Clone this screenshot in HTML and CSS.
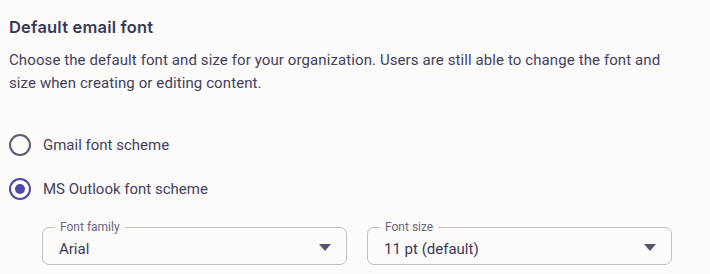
FILE: index.html
```html
<!DOCTYPE html>
<html lang="en">
  <head>
    <meta charset="UTF-8" />
    <title>Default email font</title>
    <link rel="stylesheet" href="styles.css">
  </head>
  <body>
    <div class="section">
      <h2>Default email font</h2>
      <p class="desc">Choose the default font and size for your organization. Users are still able to change the font and size when creating or editing content.</p>

      <div class="options">
        <label class="radio">
          <span class="circle"></span>
          <span>Gmail font scheme</span>
        </label>
        <label class="radio checked">
          <span class="circle"></span>
          <span>MS Outlook font scheme</span>
        </label>
      </div>

      <div class="selects">
        <div class="field">
          <span class="field-label">Font family</span>
          <span class="value">Arial</span>
          <span class="arrow"></span>
        </div>
        <div class="field">
          <span class="field-label">Font size</span>
          <span class="value">11 pt (default)</span>
          <span class="arrow"></span>
        </div>
      </div>
    </div>
  </body>
</html>
```

FILE: styles.css
```css
body {
  margin: 0;
  padding: 0;
  background-color: #fcfbfa;
  font-family: Roboto, Arial, sans-serif;
  color: #43415d;
}

.section {
  padding: 16px 10px 0 9px;
}

h2 {
  margin: 0;
  font-family: Inter, sans-serif;
  font-size: 16.5px;
  font-weight: 600;
  letter-spacing: 0.2px;
  line-height: 22px;
  color: #3a3858;
}

.desc {
  margin: 11px 0 0;
  font-size: 15px;
  letter-spacing: 0.1px;
  line-height: 23px;
  width: 670px;
}

.options {
  display: flex;
  flex-direction: column;
  gap: 22px;
  margin-top: 39px;
}

.radio {
  display: flex;
  align-items: center;
  gap: 12px;
  font-size: 15px;
  height: 22px;
}

.circle {
  box-sizing: border-box;
  width: 22px;
  height: 22px;
  border: 2px solid #5c5a70;
  border-radius: 50%;
  display: flex;
  align-items: center;
  justify-content: center;
}

.checked .circle {
  border-color: #4e4aa3;
}

.checked .circle::after {
  content: "";
  width: 10px;
  height: 10px;
  border-radius: 50%;
  background-color: #4e4aa3;
}

.selects {
  display: flex;
  gap: 20px;
  margin: 27px 0 0 33px;
}

.field {
  position: relative;
  box-sizing: border-box;
  width: 305px;
  height: 38px;
  border: 1px solid #c2bfc4;
  border-radius: 7px;
  display: flex;
  align-items: center;
  padding: 6px 15px 0 16px;
}

.field-label {
  position: absolute;
  top: -9px;
  left: 12px;
  padding: 0 5px;
  font-size: 12px;
  line-height: 16px;
  color: #6a677f;
  background-color: #fcfbfa;
}

.value {
  flex: 1;
  font-size: 15px;
  color: #3a3858;
}

.arrow {
  width: 0;
  height: 0;
  border-left: 6px solid transparent;
  border-right: 6px solid transparent;
  border-top: 7px solid #57546f;
  margin-top: -4px;
}
```
